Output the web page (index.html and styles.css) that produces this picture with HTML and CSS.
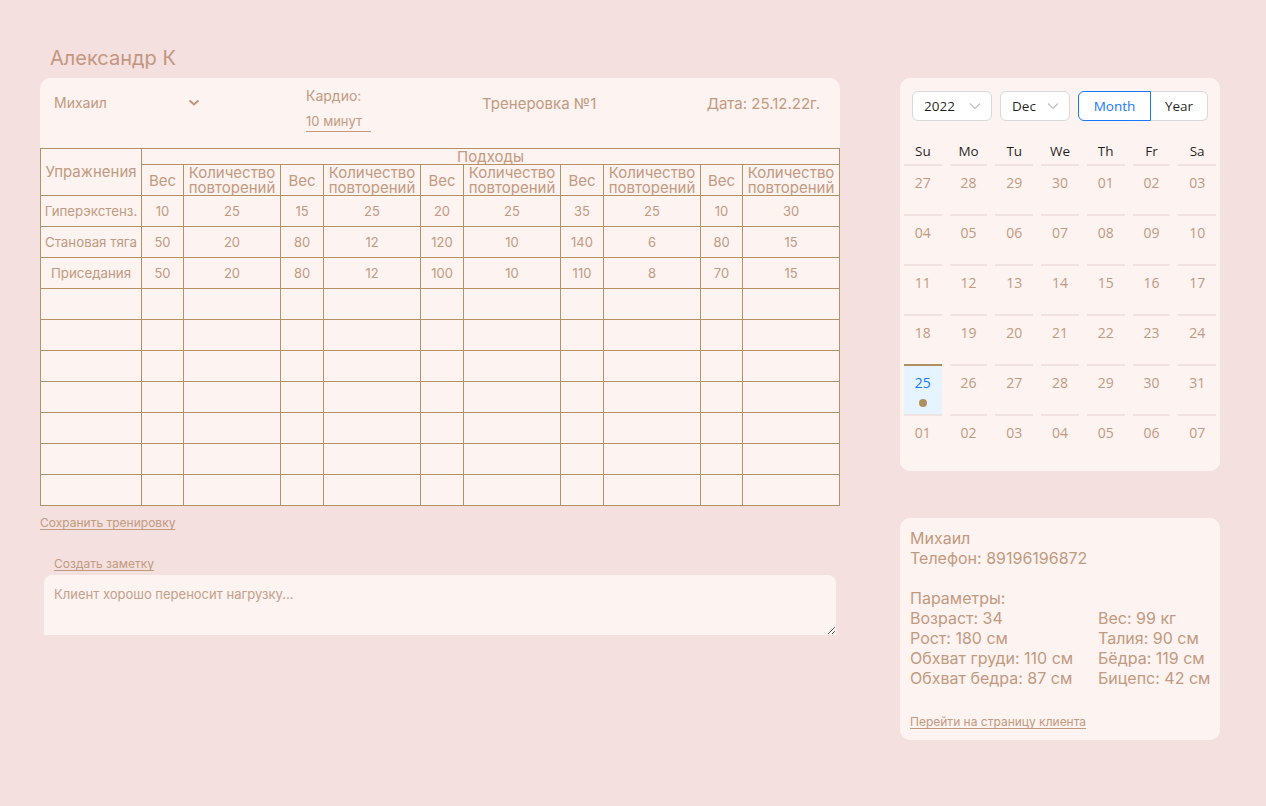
FILE: index.html
```html
<!DOCTYPE html>
<html lang="ru">
<head>
<meta charset="utf-8">
<title>Тренировка</title>
<link rel="stylesheet" href="styles.css">
</head>
<body>
<div class="page">
  <h1 class="title">Александр К</h1>
  <div class="left">
    <div class="workout">
      <div class="w-head">
        <div class="w-client">
          <span>Михаил</span>
          <svg class="chev" width="12" height="8" viewBox="0 0 12 8"><path d="M1.5 1.5 L6 5.5 L10.5 1.5" fill="none" stroke="#c0957c" stroke-width="2"/></svg>
        </div>
        <div class="w-cardio">
          <div>Кардио:</div>
          <div class="cardio-input">10 минут</div>
        </div>
        <div class="w-name">Тренеровка №1</div>
        <div class="w-date">Дата: 25.12.22г.</div>
      </div>
      <table class="sets">
        <colgroup>
          <col class="c-ex"><col class="c-w"><col class="c-r"><col class="c-w2"><col class="c-r"><col class="c-w2"><col class="c-r"><col class="c-w2"><col class="c-r"><col class="c-w"><col class="c-r">
        </colgroup>
        <thead>
          <tr class="h1"><th rowspan="2" class="ex">Упражнения</th><th colspan="10">Подходы</th></tr>
          <tr class="h2">
            <th>Вес</th><th>Количество<br>повторений</th>
            <th>Вес</th><th>Количество<br>повторений</th>
            <th>Вес</th><th>Количество<br>повторений</th>
            <th>Вес</th><th>Количество<br>повторений</th>
            <th>Вес</th><th>Количество<br>повторений</th>
          </tr>
        </thead>
        <tbody>
          <tr><td class="ex">Гиперэкстенз.</td><td>10</td><td>25</td><td>15</td><td>25</td><td>20</td><td>25</td><td>35</td><td>25</td><td>10</td><td>30</td></tr>
          <tr><td class="ex">Становая тяга</td><td>50</td><td>20</td><td>80</td><td>12</td><td>120</td><td>10</td><td>140</td><td>6</td><td>80</td><td>15</td></tr>
          <tr><td class="ex">Приседания</td><td>50</td><td>20</td><td>80</td><td>12</td><td>100</td><td>10</td><td>110</td><td>8</td><td>70</td><td>15</td></tr>
          <tr><td></td><td></td><td></td><td></td><td></td><td></td><td></td><td></td><td></td><td></td><td></td></tr>
          <tr><td></td><td></td><td></td><td></td><td></td><td></td><td></td><td></td><td></td><td></td><td></td></tr>
          <tr><td></td><td></td><td></td><td></td><td></td><td></td><td></td><td></td><td></td><td></td><td></td></tr>
          <tr><td></td><td></td><td></td><td></td><td></td><td></td><td></td><td></td><td></td><td></td><td></td></tr>
          <tr><td></td><td></td><td></td><td></td><td></td><td></td><td></td><td></td><td></td><td></td><td></td></tr>
          <tr><td></td><td></td><td></td><td></td><td></td><td></td><td></td><td></td><td></td><td></td><td></td></tr>
          <tr><td></td><td></td><td></td><td></td><td></td><td></td><td></td><td></td><td></td><td></td><td></td></tr>
        </tbody>
      </table>
    </div>
    <a class="link save" href="#">Сохранить тренировку</a>
    <div class="note">
      <a class="link" href="#">Создать заметку</a>
      <textarea class="note-area" placeholder="Клиент хорошо переносит нагрузку..."></textarea>
    </div>
  </div>

  <div class="right">
    <div class="calendar">
      <div class="cal-head">
        <div class="sel sel-year"><span>2022</span><svg width="12" height="8" viewBox="0 0 12 8"><path d="M1 1.5 L6 6.5 L11 1.5" fill="none" stroke="#bfbfbf" stroke-width="1.2"/></svg></div>
        <div class="sel sel-month"><span>Dec</span><svg width="12" height="8" viewBox="0 0 12 8"><path d="M1 1.5 L6 6.5 L11 1.5" fill="none" stroke="#bfbfbf" stroke-width="1.2"/></svg></div>
        <div class="seg"><span class="seg-item active">Month</span><span class="seg-item">Year</span></div>
      </div>
      <div class="cal-grid">
        <div class="wd">Su</div><div class="wd">Mo</div><div class="wd">Tu</div><div class="wd">We</div><div class="wd">Th</div><div class="wd">Fr</div><div class="wd">Sa</div>
        <div class="day">27</div><div class="day">28</div><div class="day">29</div><div class="day">30</div><div class="day">01</div><div class="day">02</div><div class="day">03</div>
        <div class="day">04</div><div class="day">05</div><div class="day">06</div><div class="day">07</div><div class="day">08</div><div class="day">09</div><div class="day">10</div>
        <div class="day">11</div><div class="day">12</div><div class="day">13</div><div class="day">14</div><div class="day">15</div><div class="day">16</div><div class="day">17</div>
        <div class="day">18</div><div class="day">19</div><div class="day">20</div><div class="day">21</div><div class="day">22</div><div class="day">23</div><div class="day">24</div>
        <div class="day selected">25<span class="dot"></span></div><div class="day">26</div><div class="day">27</div><div class="day">28</div><div class="day">29</div><div class="day">30</div><div class="day">31</div>
        <div class="day">01</div><div class="day">02</div><div class="day">03</div><div class="day">04</div><div class="day">05</div><div class="day">06</div><div class="day">07</div>
      </div>
    </div>

    <div class="client">
      <div>Михаил</div>
      <div>Телефон: 89196196872</div>
      <div class="gap"></div>
      <div>Параметры:</div>
      <div class="params">
        <div>Возраст: 34</div><div>Вес: 99 кг</div>
        <div>Рост: 180 см</div><div>Талия: 90 см</div>
        <div>Обхват груди: 110 см</div><div>Бёдра: 119 см</div>
        <div>Обхват бедра: 87 см</div><div>Бицепс: 42 см</div>
      </div>
      <a class="link client-link" href="#">Перейти на страницу клиента</a>
    </div>
  </div>
</div>
</body>
</html>
```

FILE: styles.css
```css
* { box-sizing: border-box; }
html, body { margin: 0; padding: 0; }
body {
  background: #f4e0de;
  font-family: Inter, "Noto Sans", sans-serif;
  color: #c29a80;
  width: 1266px;
  height: 806px;
  overflow: hidden;
}
.page {
  display: grid;
  grid-template-columns: 800px 320px;
  grid-template-rows: auto auto;
  column-gap: 60px;
  padding: 46px 0 0 40px;
}
.title {
  grid-column: 1 / 3;
  margin: 0 0 8px 0;
  padding-left: 10px;
  font-size: 20px;
  line-height: 24px;
  font-weight: 400;
  color: #c4967e;
}
.left { grid-column: 1; grid-row: 2; }
.right { grid-column: 2; grid-row: 2; display: flex; flex-direction: column; gap: 47px; }

.workout {
  background: #fdf3f1;
  border-radius: 10px 10px 0 0;
}
.w-head {
  height: 70px;
  display: flex;
  padding: 0 20px 0 14px;
  font-size: 14px;
  line-height: 18px;
}
.w-client {
  width: 252px;
  display: flex;
  align-items: flex-start;
  padding-top: 16px;
}
.w-client span { width: 134px; }
.w-client .chev { margin-top: 5px; }
.w-cardio {
  width: 176px;
  padding-top: 9px;
}
.cardio-input {
  margin-top: 7px;
  width: 65px;
  border-bottom: 1px solid #c29a80;
  font-size: 13px;
  line-height: 18px;
  height: 20px;
}
.w-name, .w-date {
  font-size: 15px;
  padding-top: 17px;
}
.w-name { flex: 1; }

.sets {
  width: 800px;
  border-collapse: collapse;
  table-layout: fixed;
  color: #c29a80;
}
.c-ex { width: 101px; }
.c-w { width: 42px; }
.c-w2 { width: 43px; }
.c-r { width: 97px; }
.sets th, .sets td {
  border: 1px solid #b39263;
  padding: 0;
  text-align: center;
  vertical-align: middle;
  font-weight: 400;
  white-space: nowrap;
}
.sets .h1 th { height: 16px; font-size: 15px; line-height: 14px; }
.sets .h1 th.ex { line-height: 16px; }
.sets .h2 th { height: 31px; font-size: 15px; line-height: 15px; vertical-align: bottom; padding-bottom: 0; }
.sets .h2 th:nth-child(odd) { vertical-align: middle; padding-top: 1px; }
.sets td { height: 31px; font-size: 13px; line-height: 16px; }
.sets td.ex { font-size: 13.3px; }

.link {
  color: #c29a80;
  font-size: 12px;
  line-height: 16px;
  text-decoration: underline;
  text-underline-offset: 2px;
}
.save { display: inline-block; margin-top: 9px; }
.note {
  margin-top: 25px;
  padding: 0 4px;
}
.note .link { display: block; padding-left: 10px; margin-bottom: 3px; }
.note-area {
  display: block;
  width: 792px;
  height: 60px;
  border: none;
  border-radius: 8px 8px 0 0;
  background: #fdf3f1;
  padding: 10px 10px;
  font-family: Inter, "Noto Sans", sans-serif;
  font-size: 13px;
  line-height: 18px;
  color: #c29a80;
  outline: none;
}
.note-area::placeholder { color: #c4a08a; }

.calendar {
  background: #fdf3f1;
  border-radius: 10px;
  height: 393px;
  font-family: "Open Sans", "Noto Sans", sans-serif;
  font-size: 14px;
}
.cal-head {
  display: flex;
  gap: 8px;
  padding: 13px 12px 0 12px;
  height: 62px;
}
.sel {
  height: 30px;
  border: 1px solid #d9d9d9;
  border-radius: 6px;
  background: #fff;
  display: flex;
  align-items: center;
  justify-content: space-between;
  padding: 0 10px 0 11px;
  color: rgba(0,0,0,0.88);
  font-size: 13.5px;
}
.sel-year { width: 80px; }
.sel-month { width: 70px; }
.seg { display: flex; height: 30px; }
.seg-item {
  height: 30px;
  line-height: 28px;
  border: 1px solid #d9d9d9;
  background: #fff;
  color: rgba(0,0,0,0.88);
  font-size: 13.5px;
  text-align: center;
}
.seg-item.active {
  width: 73px;
  border-color: #1677ff;
  color: #1677ff;
  border-radius: 6px 0 0 6px;
}
.seg-item:last-child {
  width: 57px;
  border-left: none;
  border-radius: 0 6px 6px 0;
}
.cal-grid {
  display: grid;
  grid-template-columns: repeat(7, 1fr);
}
.wd {
  text-align: center;
  height: 24px;
  line-height: 22px;
  color: rgba(0,0,0,0.88);
  font-size: 13.5px;
}
.day {
  margin: 0 4px;
  height: 50px;
  border-top: 2px solid #efe2e1;
  text-align: center;
  padding-top: 6px;
  line-height: 22px;
  color: #c29a80;
  font-size: 14px;
}
.day.selected {
  background: #e6f4ff;
  border-top-color: #b08f5e;
  color: #1677ff;
}
.dot {
  display: block;
  width: 8px;
  height: 8px;
  border-radius: 50%;
  background: #b08f5e;
  margin: 5px auto 0;
}

.client {
  background: #fdf3f1;
  border-radius: 10px;
  height: 222px;
  padding: 10px 10px;
  font-size: 16px;
  line-height: 20px;
  color: #c29a80;
  white-space: nowrap;
}
.gap { height: 20px; }
.params {
  display: grid;
  grid-template-columns: 188px auto;
}
.client-link { display: inline-block; margin-top: 26px; }
```
